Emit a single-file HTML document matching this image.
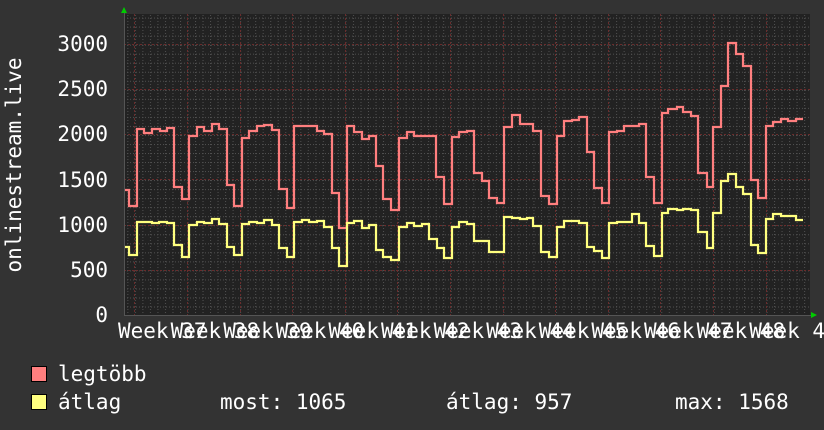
<!DOCTYPE html>
<html><head><meta charset="utf-8"><style>
html,body{margin:0;padding:0;background:#333;}
svg{display:block;}
text{font-family:"DejaVu Sans Mono","Liberation Mono",monospace;font-size:21px;fill:#fff;}
</style></head><body>
<svg width="824" height="430" viewBox="0 0 824 430" xmlns="http://www.w3.org/2000/svg">
<defs>
<pattern id="hmin" x="124" y="-0.5" width="3" height="9.03" patternUnits="userSpaceOnUse"><rect x="0" y="0" width="1" height="1" fill="#505050"/></pattern>
<pattern id="vmin" x="-0.5" y="15" width="7.52" height="3" patternUnits="userSpaceOnUse"><rect x="0" y="0" width="1" height="1" fill="#505050"/></pattern>
</defs>
<rect x="0" y="0" width="824" height="430" fill="#333"/>
<rect x="124" y="14" width="686" height="301" fill="#222"/>
<rect x="124" y="14" width="686" height="301" fill="url(#hmin)"/>
<rect x="124" y="14" width="686" height="301" fill="url(#vmin)"/>
<g stroke="#6a2c2c" stroke-width="1" stroke-dasharray="2,2">
<line x1="124" y1="44.5" x2="810" y2="44.5"/>
<line x1="124" y1="89.5" x2="810" y2="89.5"/>
<line x1="124" y1="134.5" x2="810" y2="134.5"/>
<line x1="124" y1="179.5" x2="810" y2="179.5"/>
<line x1="124" y1="225.5" x2="810" y2="225.5"/>
<line x1="124" y1="270.5" x2="810" y2="270.5"/>
<line x1="134.5" y1="14" x2="134.5" y2="315"/>
<line x1="187.5" y1="14" x2="187.5" y2="315"/>
<line x1="240.5" y1="14" x2="240.5" y2="315"/>
<line x1="292.5" y1="14" x2="292.5" y2="315"/>
<line x1="345.5" y1="14" x2="345.5" y2="315"/>
<line x1="397.5" y1="14" x2="397.5" y2="315"/>
<line x1="450.5" y1="14" x2="450.5" y2="315"/>
<line x1="503.5" y1="14" x2="503.5" y2="315"/>
<line x1="555.5" y1="14" x2="555.5" y2="315"/>
<line x1="608.5" y1="14" x2="608.5" y2="315"/>
<line x1="660.5" y1="14" x2="660.5" y2="315"/>
<line x1="713.5" y1="14" x2="713.5" y2="315"/>
<line x1="766.5" y1="14" x2="766.5" y2="315"/>
</g>
<line x1="124" y1="315.5" x2="812" y2="315.5" stroke="#555"/>
<line x1="124.5" y1="12" x2="124.5" y2="316" stroke="#555"/>
<polygon points="121,13 127,13 124,7" fill="#0c0"/>
<polygon points="811,312 811,318 817,315" fill="#0c0"/>
<path fill="none" stroke="#ff7f7f" stroke-width="2.2" d="M125,190 H129 V206 H137 V129 H144 V133 H152 V129 H160 V131 H167 V128 H174 V187 H182 V199 H189 V136 H197 V127 H204 V131 H212 V124 H219 V129 H227 V185 H234 V206 H242 V138 H249 V131 H257 V126 H264 V125 H272 V130 H279 V189 H287 V208 H294 V126 H317 V131 H324 V134 H332 V193 H339 V228 H347 V126 H354 V132 H362 V139 H369 V136 H376 V166 H383 V199 H391 V210 H399 V138 H407 V132 H414 V136 H436 V177 H444 V204 H452 V137 H459 V132 H467 V131 H474 V173 H482 V181 H489 V198 H497 V203 H504 V127 H512 V115 H520 V124 H533 V131 H541 V196 H549 V204 H557 V136 H564 V121 H572 V120 H579 V117 H587 V152 H594 V188 H602 V203 H609 V132 H617 V131 H624 V126 H639 V124 H646 V177 H654 V203 H662 V113 H668 V109 H677 V107 H683 V112 H691 V116 H698 V173 H707 V187 H713 V127 H721 V86 H728 V43 H736 V54 H743 V66 H751 V180 H758 V198 H766 V126 H773 V122 H781 V119 H788 V121 H796 V119 H803"/>
<path fill="none" stroke="#ffff7f" stroke-width="2.2" d="M125,247 H129 V255 H137 V222 H152 V223 H159 V222 H167 V223 H174 V245 H182 V257 H189 V225 H197 V222 H204 V223 H212 V219 H219 V224 H227 V247 H234 V255 H242 V224 H249 V222 H257 V223 H264 V220 H272 V225 H279 V248 H287 V257 H294 V222 H302 V220 H309 V222 H317 V221 H324 V227 H332 V248 H339 V266 H347 V223 H354 V221 H362 V228 H369 V225 H376 V250 H383 V257 H391 V260 H399 V227 H407 V223 H414 V226 H422 V224 H429 V239 H437 V248 H444 V258 H452 V227 H459 V222 H467 V224 H474 V241 H489 V252 H504 V217 H512 V218 H520 V219 H527 V218 H533 V226 H541 V252 H549 V257 H557 V227 H564 V221 H579 V223 H587 V247 H594 V251 H602 V258 H609 V223 H617 V222 H632 V214 H639 V223 H646 V246 H654 V256 H662 V213 H668 V209 H677 V210 H683 V209 H691 V210 H698 V232 H707 V248 H713 V213 H721 V181 H728 V174 H736 V187 H743 V194 H751 V245 H758 V253 H766 V219 H773 V214 H781 V216 H796 V220 H803"/>
<g text-anchor="end">
<text x="108" y="51">3000</text>
<text x="108" y="96">2500</text>
<text x="108" y="141">2000</text>
<text x="108" y="187">1500</text>
<text x="108" y="232">1000</text>
<text x="108" y="277">500</text>
<text x="108" y="322">0</text>
</g>
<text transform="translate(21,165) rotate(-90)" text-anchor="middle">onlinestream.live</text>
<g>
<text x="118" y="338">Week 37</text>
<text x="170.6" y="338">Week 38</text>
<text x="223.2" y="338">Week 39</text>
<text x="275.8" y="338">Week 40</text>
<text x="328.4" y="338">Week 41</text>
<text x="381" y="338">Week 42</text>
<text x="433.6" y="338">Week 43</text>
<text x="486.2" y="338">Week 44</text>
<text x="538.8" y="338">Week 45</text>
<text x="591.4" y="338">Week 46</text>
<text x="644" y="338">Week 47</text>
<text x="696.6" y="338">Week 48</text>
<text x="749.2" y="338">Week 49</text>
</g>
<rect x="31.5" y="366.5" width="15" height="15" fill="#ff7f7f" stroke="#000"/>
<rect x="31.5" y="394.5" width="15" height="15" fill="#ffff7f" stroke="#000"/>
<text x="58" y="381">legtöbb</text>
<text x="58" y="409">átlag</text>
<text x="220" y="409">most: 1065</text>
<text x="446" y="409">átlag: 957</text>
<text x="675" y="409">max: 1568</text>
</svg>
</body></html>
